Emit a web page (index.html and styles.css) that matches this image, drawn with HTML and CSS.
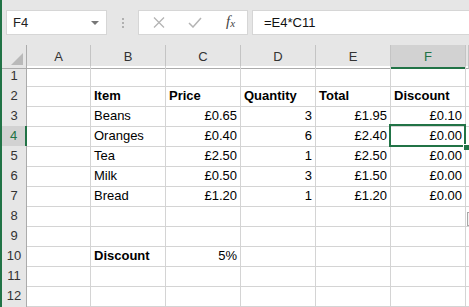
FILE: index.html
```html
<!DOCTYPE html>
<html>
<head>
    <title>Book1</title>
    <link rel="stylesheet" href="styles.css">
</head>
<body>
<div class="app">
    <div class="formula-bar">
        <div class="name-box">
            <span>F4</span>
            <span class="drop"></span>
        </div>
        <div class="grip"><i></i><i></i><i></i></div>
        <div class="fx-buttons">
            <svg class="cancel" width="12" height="11" viewBox="0 0 12 11"><path d="M1 0.5 L11 10.5 M11 0.5 L1 10.5" stroke="#b4b4b4" stroke-width="1.3" fill="none"/></svg>
            <svg class="enter" width="14" height="11" viewBox="0 0 14 11"><path d="M1 6 L5 10 L13 1" stroke="#b4b4b4" stroke-width="1.5" fill="none"/></svg>
            <span class="fx">f<sub>x</sub></span>
        </div>
        <div class="formula">=E4*C11</div>
    </div>

    <div class="sheet">
        <div class="row head">
            <div class="corner"><span class="tri"></span></div>
            <div class="col">A</div>
            <div class="col">B</div>
            <div class="col">C</div>
            <div class="col">D</div>
            <div class="col">E</div>
            <div class="col sel">F</div>
            <div class="col"></div>
        </div>
        <div class="row">
            <div class="rh">1</div><div class="c"></div><div class="c"></div><div class="c"></div><div class="c"></div><div class="c"></div><div class="c"></div><div class="c"></div>
        </div>
        <div class="row">
            <div class="rh">2</div><div class="c"></div><div class="c b">Item</div><div class="c b">Price</div><div class="c b">Quantity</div><div class="c b">Total</div><div class="c b">Discount</div><div class="c"></div>
        </div>
        <div class="row">
            <div class="rh">3</div><div class="c"></div><div class="c">Beans</div><div class="c n">£0.65</div><div class="c n">3</div><div class="c n">£1.95</div><div class="c n">£0.10</div><div class="c"></div>
        </div>
        <div class="row">
            <div class="rh sel">4</div><div class="c"></div><div class="c">Oranges</div><div class="c n">£0.40</div><div class="c n">6</div><div class="c n">£2.40</div><div class="c n active">£0.00</div><div class="c"></div>
        </div>
        <div class="row">
            <div class="rh">5</div><div class="c"></div><div class="c">Tea</div><div class="c n">£2.50</div><div class="c n">1</div><div class="c n">£2.50</div><div class="c n">£0.00</div><div class="c"></div>
        </div>
        <div class="row">
            <div class="rh">6</div><div class="c"></div><div class="c">Milk</div><div class="c n">£0.50</div><div class="c n">3</div><div class="c n">£1.50</div><div class="c n">£0.00</div><div class="c"></div>
        </div>
        <div class="row">
            <div class="rh">7</div><div class="c"></div><div class="c">Bread</div><div class="c n">£1.20</div><div class="c n">1</div><div class="c n">£1.20</div><div class="c n">£0.00</div><div class="c"></div>
        </div>
        <div class="row">
            <div class="rh">8</div><div class="c"></div><div class="c"></div><div class="c"></div><div class="c"></div><div class="c"></div><div class="c"></div><div class="c paste"><span class="paste-btn"></span></div>
        </div>
        <div class="row">
            <div class="rh">9</div><div class="c"></div><div class="c"></div><div class="c"></div><div class="c"></div><div class="c"></div><div class="c"></div><div class="c"></div>
        </div>
        <div class="row">
            <div class="rh">10</div><div class="c"></div><div class="c b">Discount</div><div class="c n">5%</div><div class="c"></div><div class="c"></div><div class="c"></div><div class="c"></div>
        </div>
        <div class="row">
            <div class="rh">11</div><div class="c"></div><div class="c"></div><div class="c"></div><div class="c"></div><div class="c"></div><div class="c"></div><div class="c"></div>
        </div>
        <div class="row">
            <div class="rh">12</div><div class="c"></div><div class="c"></div><div class="c"></div><div class="c"></div><div class="c"></div><div class="c"></div><div class="c"></div>
        </div>
        <div class="row">
            <div class="rh"></div><div class="c"></div><div class="c"></div><div class="c"></div><div class="c"></div><div class="c"></div><div class="c"></div><div class="c"></div>
        </div>
    </div>
</div>
</body>
</html>
```

FILE: styles.css
```css
html, body {
    margin: 0;
    padding: 0;
    background: #fff;
    overflow: hidden;
}
body {
    font: 13px "Liberation Sans", Arial, sans-serif;
    color: #000;
}
.app {
    width: 467px;
    height: 307px;
    border-left: 2px solid #217346;
    overflow: hidden;
}

/* formula bar */
.formula-bar {
    height: 45px;
    background: #e6e6e6;
    box-sizing: border-box;
    padding: 10px 0 0 4px;
    display: flex;
    align-items: flex-start;
}
.name-box {
    width: 101px;
    height: 25px;
    box-sizing: border-box;
    background: #fff;
    border: 1px solid #d6d6d6;
    display: flex;
    align-items: center;
    justify-content: space-between;
    padding: 0 7px 0 6px;
    color: #222;
}
.name-box .drop {
    width: 0;
    height: 0;
    border-left: 4px solid transparent;
    border-right: 4px solid transparent;
    border-top: 4px solid #777;
    margin-top: 1px;
}
.grip {
    width: 31px;
    height: 25px;
    display: flex;
    flex-direction: column;
    align-items: center;
    justify-content: center;
    gap: 2px;
}
.grip i {
    width: 2px;
    height: 2px;
    background: #b0b0b0;
}
.fx-buttons {
    width: 110px;
    height: 25px;
    box-sizing: border-box;
    background: #fff;
    border: 1px solid #d6d6d6;
    display: flex;
    align-items: center;
    padding-left: 14px;
}
.fx-buttons .enter {
    margin-left: 23px;
}
.fx-buttons .fx {
    margin-left: 24px;
    font: italic 15px "Liberation Serif", serif;
    color: #444;
    margin-top: -2px;
}
.fx-buttons .fx sub {
    font-size: 11px;
    vertical-align: -1px;
}
.formula {
    flex: 1;
    height: 25px;
    box-sizing: border-box;
    margin-left: 4px;
    background: #fff;
    border: 1px solid #d6d6d6;
    border-right: none;
    padding: 0 0 0 11px;
    line-height: 23px;
    color: #111;
}

/* sheet grid */
.row {
    display: grid;
    grid-template-columns: 25px 64px 75px 75px 75px 75px 75px 1fr;
    height: 20px;
}
.row > div {
    box-sizing: border-box;
    border-right: 1px solid #d4d4d4;
    border-bottom: 1px solid #d4d4d4;
    line-height: 20px;
    white-space: nowrap;
    overflow: visible;
}
.row.head {
    height: 21px;
    background: #e6e6e6;
}
.row.head > div {
    border-right: 1px solid #c4c4c4;
    border-bottom: 1px solid #ababab;
    text-align: center;
    color: #333;
    line-height: 21px;
    padding-top: 1px;
}
.row.head .corner {
    position: relative;
    border-right-color: #ababab;
}
.corner .tri {
    position: absolute;
    right: 3px;
    bottom: 3px;
    width: 0;
    height: 0;
    border-left: 12px solid transparent;
    border-bottom: 12px solid #b9b9b9;
}
.row.head .col.sel {
    background: #d2d2d2;
    color: #217346;
    border-bottom: 2px solid #217346;
}
.rh {
    background: #e6e6e6;
    text-align: center;
    color: #333;
}
.row > .rh {
    border-right: 1px solid #ababab;
    border-bottom: 1px solid #d0d0d0;
}
.row > .rh.sel {
    background: #d2d2d2;
    color: #217346;
    border-right: 2px solid #217346;
}
.c {
    padding: 0 3px;
}
.c.b {
    font-weight: bold;
}
.c.n {
    text-align: right;
}
.c.active {
    position: relative;
}
.c.active::after {
    content: "";
    position: absolute;
    left: -2px;
    top: -2px;
    right: -1px;
    bottom: -1px;
    border: 2px solid #217346;
}
.c.active::before {
    content: "";
    position: absolute;
    right: -4px;
    bottom: -4px;
    width: 5px;
    height: 5px;
    background: #217346;
    border-left: 1px solid #fff;
    border-top: 1px solid #fff;
    z-index: 1;
}
.c.paste {
    position: relative;
}
.paste-btn {
    position: absolute;
    left: 1px;
    top: 6px;
    width: 6px;
    height: 12px;
    border: 1px solid #a8a8a8;
    background: #f4f4f4;
}
```
